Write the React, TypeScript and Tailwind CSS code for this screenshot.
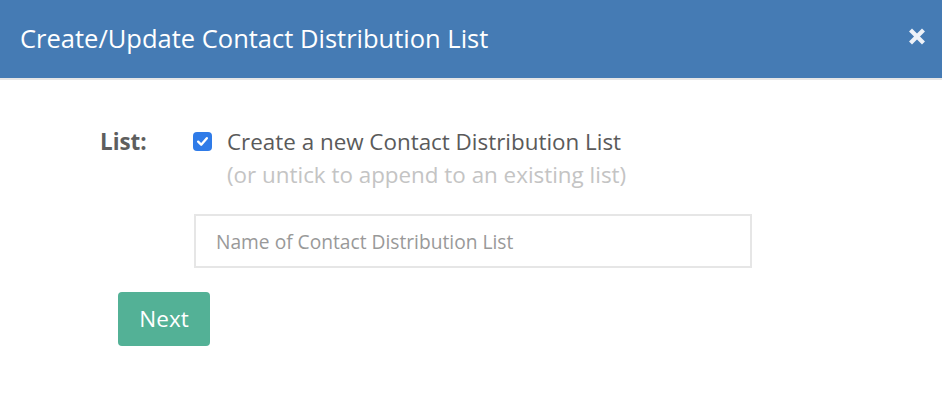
import React from "react";

export default function App() {
  return (
    <div className="w-[942px] h-[414px] bg-white" style={{ fontFamily: '"Open Sans", sans-serif' }}>
      <div className="h-[78px] bg-[#457bb4] flex items-center justify-between pl-[20px] pr-[17px]">
        <h1 className="text-white text-[25.5px] leading-none">Create/Update Contact Distribution List</h1>
        <svg width="16" height="17" viewBox="0 0 16 17" className="mb-[6px]">
          <path d="M3 3.5 L13 13.5 M13 3.5 L3 13.5" stroke="#eef2f8" strokeWidth="4.2" strokeLinecap="square" />
        </svg>
      </div>
      <div className="h-[2px] bg-[#e6e6e6]" />
      <div className="pt-[45px] pl-[100px]">
        <div className="flex">
          <div className="w-[93px] text-[22.4px] font-bold text-[#5e5e5e] leading-[33px]">List:</div>
          <div>
            <div className="flex items-center">
              <span className="w-[19px] h-[19px] rounded-[4px] bg-[#2f7be8] flex items-center justify-center">
                <svg width="13" height="13" viewBox="0 0 12 12">
                  <path d="M2 6.2 L4.8 9 L10 3" stroke="white" strokeWidth="2.2" fill="none" strokeLinecap="round" strokeLinejoin="round" />
                </svg>
              </span>
              <span className="ml-[15px] text-[22.4px] text-[#5a5a5a] leading-[33px]">Create a new Contact Distribution List</span>
            </div>
            <div className="ml-[34px] text-[22.4px] text-[#c4c4c4] leading-[33px]">(or untick to append to an existing list)</div>
          </div>
        </div>
        <div className="pl-[94px] mt-[23px]">
          <input
            className="w-[558px] h-[54px] border-2 border-[#e6e6e6] px-[20px] text-[19.2px] text-[#555] placeholder:text-[#999] outline-none"
            placeholder="Name of Contact Distribution List"
          />
        </div>
        <button className="ml-[18px] mt-[24px] w-[92px] h-[54px] bg-[#53b196] rounded-[4px] text-white text-[22.5px] leading-[54px]">Next</button>
      </div>
    </div>
  );
}
